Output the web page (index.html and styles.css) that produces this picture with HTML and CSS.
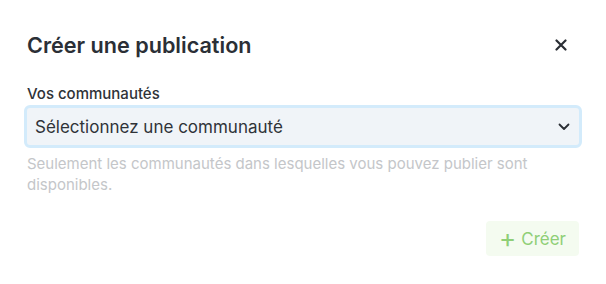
FILE: index.html
```html
<!DOCTYPE html>
<html lang="fr">
<head>
<meta charset="utf-8">
<link rel="stylesheet" href="styles.css">
</head>
<body>
<div class="dialog">
  <div class="header">
    <h1 class="title">Créer une publication</h1>
    <button class="close" aria-label="Fermer">
      <svg width="12" height="12" viewBox="0 0 12 12"><path d="M1.5 1.5L10.5 10.5M10.5 1.5L1.5 10.5" stroke="#2a2e34" stroke-width="2.2" stroke-linecap="round"/></svg>
    </button>
  </div>
  <label class="label">Vos communautés</label>
  <div class="select">
    <span class="select-text">Sélectionnez une communauté</span>
    <svg class="chev" width="12" height="8" viewBox="0 0 12 8"><path d="M1.5 1.5L6 6L10.5 1.5" fill="none" stroke="#2a2e34" stroke-width="1.8" stroke-linecap="round" stroke-linejoin="round"/></svg>
  </div>
  <p class="help">Seulement les communautés dans lesquelles vous pouvez publier sont disponibles.</p>
  <div class="footer">
    <button class="create"><span class="plus">+</span>Créer</button>
  </div>
</div>
</body>
</html>
```
FILE: styles.css
```css
html, body {
  margin: 0;
  padding: 0;
  background: #ffffff;
}
body {
  font-family: Inter, "Noto Sans", sans-serif;
  width: 606px;
  height: 284px;
  overflow: hidden;
}
.dialog {
  padding: 31px 27px 0 27px;
  box-sizing: border-box;
  width: 606px;
  height: 284px;
  display: flex;
  flex-direction: column;
}
.header {
  display: flex;
  align-items: center;
  justify-content: space-between;
  height: 28px;
}
.title {
  margin: 0;
  font-size: 21.6px;
  font-weight: 600;
  color: #2b2f36;
}
.close {
  border: 0;
  background: none;
  padding: 0;
  margin-right: 12px;
  display: flex;
  width: 12px;
  height: 12px;
}
.label {
  margin-top: 25px;
  font-size: 15px;
  font-weight: 450;
  color: #2f3338;
  line-height: 19px;
}
.select {
  margin: 2px 0 0 -3px;
  width: 558px;
  height: 43px;
  box-sizing: border-box;
  border: 3px solid #d3ebfb;
  border-radius: 6px;
  background: #f0f4f8;
  display: flex;
  align-items: center;
  justify-content: space-between;
  padding: 0 8px 0 8px;
}
.select-text {
  font-size: 17px;
  font-weight: 400;
  color: #2f3338;
}
.chev {
  margin-right: 1px;
}
.help {
  margin: 5px 0 0 0;
  font-size: 15px;
  line-height: 21px;
  color: #c4c6c9;
  width: 530px;
}
.footer {
  display: flex;
  justify-content: flex-end;
  margin-top: 26px;
  padding-right: 0;
}
.create {
  border: 0;
  background: #f4fbf0;
  color: #8fcf77;
  font-family: Inter, "Noto Sans", sans-serif;
  font-size: 17px;
  font-weight: 400;
  width: 93px;
  height: 35px;
  border-radius: 4px;
  display: flex;
  align-items: center;
  justify-content: center;
  padding: 0;
}
.plus {
  font-size: 26px;
  font-weight: 400;
  margin-right: 5px;
  line-height: 1;
  position: relative;
  top: -1px;
}
```
